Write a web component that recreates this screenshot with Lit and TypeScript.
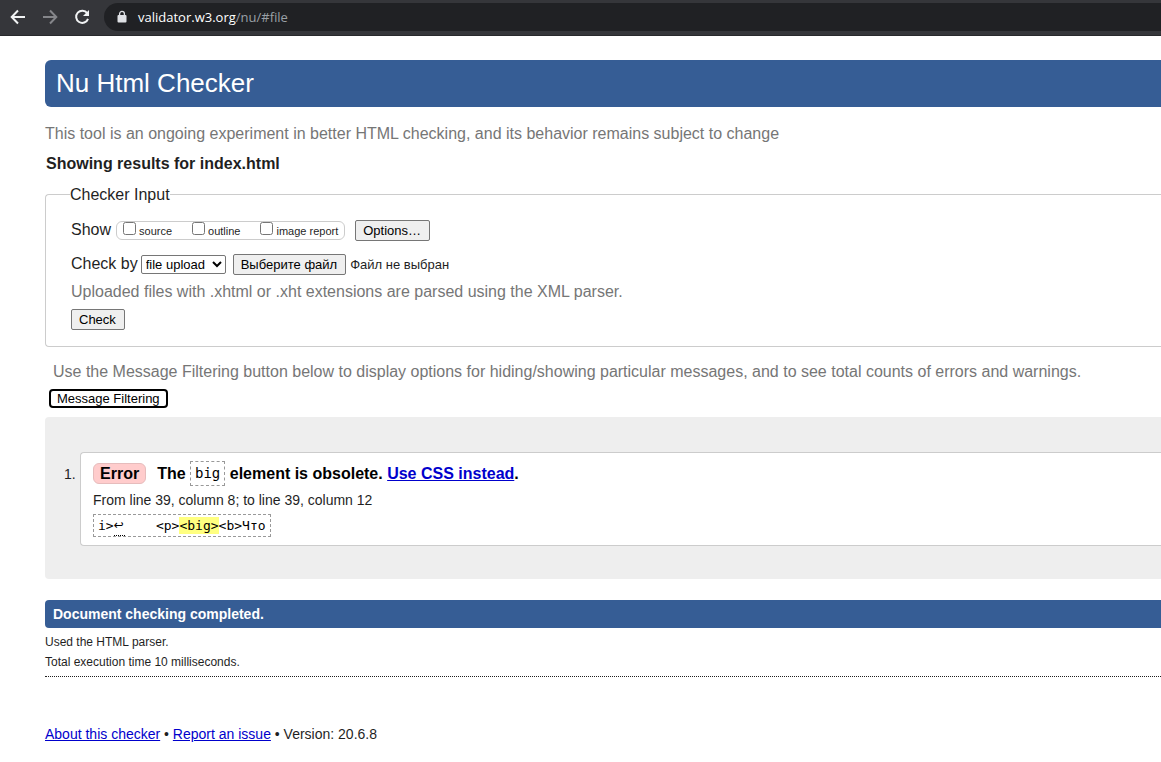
import { LitElement, html, css } from "lit";
import { customElement, state } from "lit/decorators.js";

@customElement("browser-bar")
class BrowserBar extends LitElement {
  static styles = css`
    :host {
      display: flex;
      align-items: center;
      height: 36px;
      box-sizing: border-box;
      padding: 3px 0 4px 8px;
      gap: 12px;
      background: #35363a;
      border-bottom: 1px solid #28292c;
    }
    .nav {
      display: flex;
      padding: 0;
      border: 0;
      background: none;
      color: #f1f3f4;
    }
    .nav:disabled {
      color: #85868a;
    }
    .nav svg {
      width: 20px;
      height: 20px;
    }
    .address {
      flex: 1;
      display: flex;
      align-items: center;
      gap: 11px;
      height: 28px;
      padding-left: 13px;
      border-radius: 14px 0 0 14px;
      background: #202124;
      color: #9aa0a6;
      font: 13px/20px "Open Sans", "Noto Sans", sans-serif;
    }
    .address svg {
      width: 10px;
      height: 14px;
    }
    .host {
      color: #ffffff;
    }
  `;

  render() {
    return html`
      <button class="nav" aria-label="Back">
        <svg viewBox="0 0 20 20" fill="none" stroke="currentColor" stroke-width="2">
          <path d="M17 10H4M10 3.5L3.7 10l6.3 6.5" />
        </svg>
      </button>
      <button class="nav" aria-label="Forward" disabled>
        <svg viewBox="0 0 20 20" fill="none" stroke="currentColor" stroke-width="2">
          <path d="M3 10h13M10 3.5l6.3 6.5-6.3 6.5" />
        </svg>
      </button>
      <button class="nav" aria-label="Reload">
        <svg viewBox="0 0 20 20" fill="none" stroke="currentColor" stroke-width="2">
          <path d="M15.2 6.2A6.1 6.1 0 1 0 16 11.8" />
          <path d="M17 3v6h-6z" fill="currentColor" stroke="none" />
        </svg>
      </button>
      <div class="address" role="textbox" aria-label="Address">
        <svg viewBox="0 0 10 14">
          <rect x="0.5" y="5" width="9" height="7.5" rx="1" fill="#dfe1e5" />
          <path d="M2.6 5.5V3.8a2.4 2.4 0 0 1 4.8 0v1.7" fill="none" stroke="#dfe1e5" stroke-width="1.3" />
        </svg>
        <span><span class="host">validator.w3.org</span>/nu/#file</span>
      </div>
    `;
  }
}

@customElement("checker-form")
class CheckerForm extends LitElement {
  @state() private fileName = "";

  static styles = css`
    :host {
      display: block;
    }
    .box {
      margin: 0;
      padding: 14px 25px 16px;
      border: 1px solid #cccccc;
      border-right: 0;
      border-radius: 4px 0 0 4px;
    }
    .legend {
      padding: 2px 0 0;
      margin-left: -1px;
      line-height: 20px;
    }
    .row {
      display: flex;
      align-items: center;
      height: 22px;
      margin-bottom: 12px;
    }
    .group {
      display: flex;
      align-items: center;
      box-sizing: border-box;
      height: 19px;
      margin: 0 10px 0 5px;
      padding: 0 6px;
      gap: 20px;
      border: 1px solid #cccccc;
      border-radius: 6px;
      font-size: 11px;
    }
    .option {
      display: flex;
      align-items: center;
      gap: 3px;
      padding-top: 2px;
      line-height: 17px;
    }
    .tick {
      width: 13px;
      height: 13px;
      margin: 0 0 5px;
    }
    .button {
      box-sizing: border-box;
      height: 21px;
      padding: 0 8px 0 7px;
      border: 1px solid #767676;
      border-radius: 2px;
      background: #efefef;
      color: #000000;
      font: 13px/17px "Liberation Sans", Arial, sans-serif;
    }
    .method {
      box-sizing: border-box;
      width: 85px;
      height: 19px;
      margin: 0 7px 0 3px;
      padding: 0;
      border: 1px solid #767676;
      border-radius: 2px;
      background: #ffffff;
      color: #000000;
      font: 13px/17px "Liberation Sans", Arial, sans-serif;
    }
    .file {
      margin-left: 4px;
      padding-top: 2px;
      font-size: 13px;
    }
    .hint {
      margin: -5px 0 7px;
      color: #767676;
      line-height: 20px;
    }
  `;

  private pick() {
    this.renderRoot.querySelector<HTMLInputElement>("#file")?.click();
  }

  private picked(e: Event) {
    this.fileName = (e.target as HTMLInputElement).files?.[0]?.name ?? "";
  }

  render() {
    return html`
      <fieldset class="box">
        <legend class="legend">Checker Input</legend>
        <div class="row">
          <span>Show</span>
          <div class="group">
            ${["source", "outline", "image report"].map(
              (name) => html`<label class="option"><input class="tick" type="checkbox" />${name}</label>`
            )}
          </div>
          <button class="button">Options…</button>
        </div>
        <div class="row">
          <label for="method">Check by</label>
          <select class="method" id="method">
            <option>file upload</option>
          </select>
          <input id="file" type="file" hidden @change=${this.picked} />
          <button class="button" @click=${this.pick}>Выберите файл</button>
          <label class="file" for="file">${this.fileName || "Файл не выбран"}</label>
        </div>
        <p class="hint">Uploaded files with .xhtml or .xht extensions are parsed using the XML parser.</p>
        <button class="button">Check</button>
      </fieldset>
    `;
  }
}

@customElement("checker-results")
class CheckerResults extends LitElement {
  static styles = css`
    :host {
      display: block;
      padding: 35px 0 33px 35px;
      border-radius: 4px 0 0 4px;
      background: #eeeeee;
    }
    .list {
      margin: 0;
      padding: 0;
      list-style: none;
      counter-reset: message;
    }
    .item {
      display: flex;
      margin-left: -16px;
      counter-increment: message;
    }
    .item::before {
      content: counter(message) ".";
      width: 16px;
      padding-top: 12px;
      font-size: 14px;
      line-height: 20px;
    }
    .card {
      flex: 1;
      padding: 8px 12px;
      border: 1px solid #cccccc;
      border-right: 0;
      border-radius: 4px 0 0 4px;
      background: #ffffff;
      color: #000000;
    }
    .title {
      display: flex;
      align-items: center;
      margin: 0;
      height: 25px;
      font-size: 16px;
      white-space: pre;
    }
    .badge {
      margin-right: 11px;
      padding: 0 6px;
      border: 1px solid #e6bcbc;
      border-radius: 6px;
      background: #ffcccc;
      line-height: 19px;
    }
    .code {
      padding: 0 4px;
      border: 1px dashed #999999;
      font: 14px/23px "DejaVu Sans Mono", monospace;
    }
    .link {
      color: #0000cc;
    }
    .place {
      margin: 5px 0;
      font-size: 14px;
      line-height: 18px;
      color: #1f1f1f;
    }
    .extract {
      display: flex;
      width: max-content;
      padding: 0 4px;
      border: 1px dashed #999999;
      font: 13px/21px "DejaVu Sans Mono", monospace;
      white-space: pre;
    }
    .break {
      width: 11px;
      border-bottom: 1px dotted #000000;
      font: 12px/20px "DejaVu Sans", sans-serif;
      text-decoration: none;
    }
    .mark {
      align-self: center;
      background: #ffff80;
      color: inherit;
      line-height: 17px;
    }
  `;

  render() {
    return html`
      <ol class="list">
        <li class="item">
          <div class="card">
            <h3 class="title"><strong class="badge">Error</strong><span>The </span><code class="code">big</code><span> element is obsolete. <a class="link" href="#css">Use CSS instead</a>.</span></h3>
            <p class="place">From line 39, column 8; to line 39, column 12</p>
            <code class="extract">i&gt;<abbr class="break" title="Line break">↩</abbr>    &lt;p&gt;<mark class="mark">&lt;big&gt;</mark>&lt;b&gt;Что</code>
          </div>
        </li>
      </ol>
    `;
  }
}

@customElement("app-root")
class AppRoot extends LitElement {
  static styles = css`
    :host {
      display: block;
      min-height: 100vh;
      background: #ffffff;
      color: #1f1f1f;
      font: 16px/20px "Liberation Sans", Arial, sans-serif;
    }
    .page {
      padding: 24px 0 16px 45px;
    }
    .banner {
      margin: 0 0 17px;
      padding: 0 11px;
      border-radius: 6px 0 0 6px;
      background: #365d95;
      color: #ffffff;
      font-size: 26px;
      font-weight: 400;
      line-height: 47px;
    }
    .note {
      margin: 0;
      color: #767676;
    }
    .subject {
      margin: 10px 0 9px 1px;
      font-size: 16px;
      line-height: 20px;
    }
    .filter-note {
      margin: 15px 0 7px 8px;
      color: #767676;
    }
    .filter {
      display: block;
      box-sizing: border-box;
      height: 19px;
      margin: 0 0 9px 4px;
      padding: 0 6px;
      border: 2px solid #000000;
      border-radius: 4px;
      background: #ffffff;
      color: #000000;
      font: 13px/15px "Liberation Sans", Arial, sans-serif;
    }
    .done {
      margin: 21px 0 4px;
      padding: 0 8px;
      border-radius: 4px 0 0 4px;
      background: #365d95;
      color: #ffffff;
      font-size: 14px;
      font-weight: 700;
      line-height: 28px;
    }
    .detail {
      margin: 0;
      font-size: 12px;
    }
    .footer {
      margin-top: 4px;
      padding-top: 47px;
      border-top: 1px dotted #1f1f1f;
      font-size: 14px;
    }
    .link {
      color: #0000cc;
    }
  `;

  render() {
    return html`
      <browser-bar></browser-bar>
      <main class="page">
        <h1 class="banner">Nu Html Checker</h1>
        <p class="note">This tool is an ongoing experiment in better HTML checking, and its behavior remains subject to change</p>
        <h2 class="subject">Showing results for index.html</h2>
        <checker-form></checker-form>
        <p class="filter-note">Use the Message Filtering button below to display options for hiding/showing particular messages, and to see total counts of errors and warnings.</p>
        <button class="filter">Message Filtering</button>
        <checker-results></checker-results>
        <p class="done">Document checking completed.</p>
        <p class="detail">Used the HTML parser.</p>
        <p class="detail">Total execution time 10 milliseconds.</p>
        <footer class="footer">
          <a class="link" href="#about">About this checker</a> • <a class="link" href="#issues">Report an issue</a> • Version: 20.6.8
        </footer>
      </main>
    `;
  }
}
